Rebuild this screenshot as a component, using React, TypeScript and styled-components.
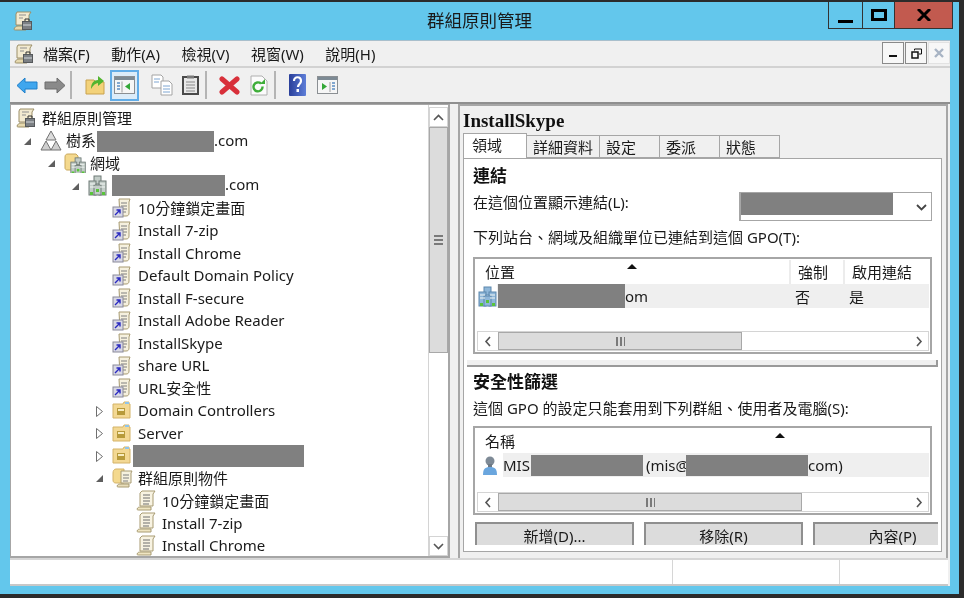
import React from "react";
import styled, { createGlobalStyle } from "styled-components";

const GlobalStyle = createGlobalStyle`
  html, body {
    margin: 0;
    padding: 0;
    background: #2b2b2b;
  }
  body {
    font-family: "Noto Sans", "Noto Sans CJK TC", sans-serif;
    color: #1a1a1a;
  }
`;

const Screen = styled.div`
  width: 964px;
  height: 598px;
  box-sizing: border-box;
  padding: 2px 5px 4px 0;
  background: #2b2b2b;
  overflow: hidden;
`;

const Window = styled.div`
  height: 100%;
  background: #63c7ec;
  display: flex;
  flex-direction: column;
  filter: blur(0.5px);
`;

const TitleBar = styled.div`
  height: 38px;
  flex: none;
  display: flex;
  align-items: flex-start;
  position: relative;
  padding-left: 13px;
`;

const TitleIcon = styled.div`
  margin-top: 9px;
`;

const TitleText = styled.div`
  position: absolute;
  left: 0;
  right: 0;
  top: 6px;
  text-align: center;
  font-size: 17.5px;
  line-height: 24px;
  color: #1a1a1a;
`;

const Caption = styled.div`
  position: absolute;
  top: 0;
  left: 828px;
  display: flex;
  height: 26px;
  border: 1px solid #333;
  border-top: none;
  box-sizing: content-box;
`;

const CaptionBtn = styled.div<{ $w: number; $danger?: boolean }>`
  width: ${(p) => p.$w}px;
  height: 26px;
  display: flex;
  align-items: center;
  justify-content: center;
  background: ${(p) => (p.$danger ? "#c25a4f" : "transparent")};
  & + & {
    border-left: 1px solid #333;
  }
`;

const Client = styled.div`
  flex: 1;
  margin: 0 9px 8px 10px;
  display: flex;
  flex-direction: column;
  min-height: 0;
  background: #f0f0f0;
`;

const MenuBar = styled.div`
  height: 28px;
  flex: none;
  display: flex;
  align-items: center;
  padding-left: 4px;
  border-top: 1px solid #a9bfcc;
  border-bottom: 2px solid #d2d2d2;
  box-sizing: border-box;
  position: relative;
`;

const MenuIcon = styled.div`
  width: 29px;
  display: flex;
`;

const MenuItem = styled.div`
  font-size: 15px;
  line-height: 22px;
  margin-right: 21.5px;
  white-space: nowrap;
`;

const MdiButtons = styled.div`
  position: absolute;
  right: 0;
  top: 1px;
  display: flex;
  gap: 1px;
`;

const MdiBtn = styled.div<{ $off?: boolean }>`
  width: 22px;
  height: 22px;
  box-sizing: border-box;
  border: 1px solid ${(p) => (p.$off ? "#e2e2e2" : "#8a8a8a")};
  background: #f7f7f7;
  display: flex;
  align-items: center;
  justify-content: center;
`;

const ToolBar = styled.div`
  height: 36px;
  flex: none;
  display: flex;
  align-items: center;
  padding-left: 2px;
  border-bottom: 2px solid #8f8f8f;
  box-sizing: border-box;
`;

const ToolBtn = styled.div<{ $w?: number; $ml?: number; $active?: boolean }>`
  width: ${(p) => p.$w ?? 29}px;
  height: 31px;
  margin-left: ${(p) => p.$ml ?? 0}px;
  flex: none;
  box-sizing: border-box;
  display: flex;
  align-items: center;
  justify-content: center;
  ${(p) => p.$active && "background: #dcecf9; border: 2px solid #62ade8;"}
`;

const ToolSep = styled.div`
  width: 2px;
  height: 28px;
  margin: 0 1px;
  background: #b4b4b4;
  flex: none;
`;

const Panes = styled.div`
  flex: 1;
  min-height: 0;
  display: flex;
  gap: 8px;
  padding-right: 2px;
`;

const TreePane = styled.div`
  width: 440px;
  flex: none;
  background: #fff;
  border: 1px solid #a6a6a6;
  border-bottom: 2px solid #a6a6a6;
  border-right: 2px solid #a6a6a6;
  box-sizing: border-box;
  display: flex;
  min-height: 0;
`;

const Tree = styled.div`
  flex: 1;
  overflow: hidden;
  padding-top: 1.5px;
  min-width: 0;
`;

const Row = styled.div<{ $level: number }>`
  height: 22.5px;
  display: flex;
  align-items: center;
  padding-left: ${(p) => 5 + p.$level * 24}px;
  font-size: 15px;
  white-space: nowrap;
`;

const Expander = styled.div`
  width: 15px;
  height: 22px;
  flex: none;
  margin: 2px 5px 0 -20px;
  display: flex;
  align-items: center;
  justify-content: center;
`;

const NodeIcon = styled.div`
  width: 26px;
  flex: none;
  display: flex;
  align-items: center;
`;

const Redact = styled.span<{ $w: number; $h?: number; $ml?: number }>`
  display: inline-block;
  width: ${(p) => p.$w}px;
  height: ${(p) => p.$h ?? 21}px;
  margin-left: ${(p) => p.$ml ?? 0}px;
  background: #808080;
  vertical-align: middle;
  flex: none;
`;

const VScroll = styled.div`
  width: 20px;
  flex: none;
  display: flex;
  flex-direction: column;
  padding-top: 2px;
  box-sizing: border-box;
  border-left: 1px solid #d4d4d4;
`;

const VScrollBtn = styled.div`
  height: 20px;
  flex: none;
  display: flex;
  align-items: center;
  justify-content: center;
  border: 1px solid #d4d4d4;
  box-sizing: border-box;
  background: #fff;
`;

const VThumb = styled.div`
  height: 226px;
  flex: none;
  background: #dcdcdc;
  border: 1px solid #a8a8a8;
  box-sizing: border-box;
  display: flex;
  align-items: center;
  justify-content: center;
`;

const VTrack = styled.div`
  flex: 1;
`;

const Grip = styled.div`
  width: 9px;
  height: 10px;
  background: repeating-linear-gradient(to bottom, #7a7a7a 0, #7a7a7a 2px, transparent 2px, transparent 4px);
`;

const DetailPane = styled.div`
  flex: 1;
  min-width: 0;
  border: 2px solid #a6a6a6;
  border-bottom: none;
  box-sizing: border-box;
  padding: 0 4px 6px 3px;
  display: flex;
  flex-direction: column;
  min-height: 0;
`;

const GpoTitle = styled.div`
  height: 27px;
  flex: none;
  font-family: "Liberation Serif", serif;
  font-weight: bold;
  font-size: 19px;
  line-height: 30px;
  color: #111;
`;

const Tabs = styled.div`
  display: flex;
  height: 25px;
  flex: none;
  align-items: flex-end;
  position: relative;
  z-index: 1;
`;

const Tab = styled.div<{ $w: number; $active?: boolean }>`
  width: ${(p) => p.$w}px;
  height: ${(p) => (p.$active ? 25 : 23)}px;
  box-sizing: border-box;
  border: 1px solid #a6a6a6;
  border-bottom: ${(p) => (p.$active ? "none" : "1px solid #a6a6a6")};
  border-left-width: ${(p) => (p.$active ? 1 : 0)}px;
  background: ${(p) => (p.$active ? "#fff" : "#f0f0f0")};
  font-size: 15px;
  line-height: ${(p) => (p.$active ? 22 : 23)}px;
  padding-left: ${(p) => (p.$active ? 8 : 6)}px;
  white-space: nowrap;
`;

const TabPanel = styled.div`
  flex: 1;
  min-height: 0;
  background: #fff;
  border: 1px solid #a6a6a6;
  display: flex;
  flex-direction: column;
  padding: 6px 9px 0 9px;
  overflow: hidden;
`;

const Heading = styled.div`
  font-size: 17px;
  font-weight: bold;
  line-height: 22px;
  height: 22px;
  flex: none;
  color: #111;
`;

const Field = styled.div<{ $h: number }>`
  height: ${(p) => p.$h}px;
  flex: none;
  font-size: 15px;
  line-height: 30px;
  display: flex;
  align-items: flex-start;
  justify-content: space-between;
  white-space: nowrap;
`;

const Caption2 = styled(Field)`
  line-height: ${(p) => p.$h}px;
`;

const Select = styled.div`
  width: 193px;
  height: 29px;
  margin-top: 5px;
  box-sizing: border-box;
  border: 1px solid #a6a6a6;
  border-left: 2px solid #a6a6a6;
  display: flex;
  align-items: flex-start;
  justify-content: space-between;
  padding: 0 4px 0 0;
`;

const ListView = styled.div<{ $h: number; $mt: number }>`
  height: ${(p) => p.$h}px;
  margin-top: ${(p) => p.$mt}px;
  flex: none;
  border: 2px solid #a6a6a6;
  box-sizing: border-box;
  padding: 1px 1px 1px 2px;
  display: flex;
  flex-direction: column;
  position: relative;
`;

const ListHeader = styled.div`
  height: 24px;
  flex: none;
  display: flex;
  font-size: 15px;
  line-height: 24px;
  position: relative;
`;

const HeaderCell = styled.div<{ $w?: number }>`
  ${(p) => (p.$w ? `width: ${p.$w}px; flex: none;` : "flex: 1;")}
  padding-left: ${(p) => (p.$w ? 7 : 8)}px;
  box-sizing: border-box;
  & + & {
    border-left: 2px solid #ececec;
  }
`;

const SortArrow = styled.div<{ $left: number }>`
  position: absolute;
  top: 4px;
  left: ${(p) => p.$left}px;
  width: 0;
  height: 0;
  border-left: 5px solid transparent;
  border-right: 5px solid transparent;
  border-bottom: 5px solid #111;
`;

const ListRow = styled.div`
  height: 24px;
  flex: none;
  display: flex;
  align-items: center;
  font-size: 15px;
  white-space: nowrap;
`;

const RowBody = styled.div`
  flex: 1;
  height: 24px;
  background: #efefef;
  display: flex;
  align-items: center;
  min-width: 0;
`;

const RowIcon = styled.div<{ $w: number }>`
  width: ${(p) => p.$w}px;
  flex: none;
  display: flex;
  justify-content: center;
`;

const Cell = styled.span<{ $w: number; $flush?: boolean }>`
  width: ${(p) => p.$w}px;
  flex: none;
  padding-left: ${(p) => (p.$flush ? 0 : 7)}px;
  box-sizing: border-box;
`;

const Email = styled.span`
  margin-left: 3px;
`;

const ListGap = styled.div`
  flex: 1;
`;

const HScroll = styled.div`
  height: 20px;
  flex: none;
  display: flex;
  border: 1px solid #d4d4d4;
  box-sizing: border-box;
`;

const HScrollBtn = styled.div`
  width: 20px;
  flex: none;
  display: flex;
  align-items: center;
  justify-content: center;
`;

const HThumb = styled.div<{ $w: number }>`
  width: ${(p) => p.$w}px;
  flex: none;
  background: #dcdcdc;
  border: 1px solid #a8a8a8;
  box-sizing: border-box;
  display: flex;
  align-items: center;
  justify-content: center;
`;

const HGrip = styled.div`
  width: 9px;
  height: 9px;
  background: repeating-linear-gradient(to right, #7a7a7a 0, #7a7a7a 2px, transparent 2px, transparent 4px);
`;

const HTrack = styled.div`
  flex: 1;
`;

const Splitter = styled.div`
  height: 5px;
  flex: none;
  margin: 6px -6px 4px -6px;
  background: #f0f0f0;
  border-bottom: 2px solid #9a9a9a;
  border-right: 2px solid #9a9a9a;
`;

const Buttons = styled.div`
  height: 23px;
  flex: none;
  margin: 7px -6px 0 2px;
  display: flex;
  gap: 10px;
  overflow: hidden;
`;

const ActionBtn = styled.div`
  width: 159px;
  height: 23px;
  flex: none;
  box-sizing: border-box;
  background: #dcdcdc;
  border: 2px solid #8f8f8f;
  border-bottom: none;
  padding-top: 4px;
  text-align: center;
  font-size: 15px;
  line-height: 17px;
  white-space: nowrap;
`;

const StatusBar = styled.div`
  height: 28px;
  flex: none;
  margin-right: 2px;
  background: #fff;
  display: flex;
  border-top: 2px solid #d6d6d6;
  border-bottom: 2px solid #c8c8c8;
  box-sizing: border-box;
`;

const StatusCell = styled.div<{ $w?: number }>`
  ${(p) => (p.$w ? `width: ${p.$w}px; flex: none;` : "flex: 1;")}
  border-left: 1px solid #d6d6d6;
  &:first-child {
    border-left: none;
  }
`;

const GpmcIcon = () => (
  <svg width="20" height="20" viewBox="0 0 20 20">
    <path d="M4 1h14l-2 3v10H3V3z" fill="#f3ead0" stroke="#9c8f68" />
    <path d="M1 18c1-2 2-3 4-3h8v4H3c-1 0-2 0-2-1z" fill="#e6d9ae" stroke="#9c8f68" />
    <path d="M6 4h7M6 7h4" stroke="#8f8f8f" />
    <rect x="9.500" y="10.500" width="9" height="8" fill="#7c8084" stroke="#55585b" />
    <path d="M12 10V8h4v2" fill="none" stroke="#333" />
    <path d="M10 14h8" stroke="#d4d8dc" />
  </svg>
);

const ForestIcon = () => (
  <svg width="22" height="21" viewBox="0 0 22 21">
    <path d="M11 1l5 9H6z" fill="#dcdcdc" stroke="#727272" />
    <path d="M6 11l5 9H1z" fill="#cfcfcf" stroke="#727272" />
    <path d="M16 11l5 9H11z" fill="#cfcfcf" stroke="#727272" />
  </svg>
);

const Servers = ({ blue }: { blue?: boolean }) => {
  const fill = blue ? "#8fb7d9" : "#c3cdc8";
  const line = blue ? "#5d88ad" : "#6f7a76";
  return (
    <>
      <rect x="6" y="1" width="7" height="8" fill={fill} stroke={line} />
      <rect x="1" y="6" width="7" height="14" fill={fill} stroke={line} />
      <rect x="11" y="6" width="7" height="14" fill={fill} stroke={line} />
      <rect x="6" y="10" width="7" height="10" fill={fill} stroke={line} />
      <path d="M2 9h5M12 9h5M2 12h5M12 12h5" stroke="#f2f6f4" />
      <rect x="8" y="14" width="3" height="3" fill="#58c43a" />
      <rect x="2" y="17" width="3" height="3" fill="#58c43a" />
      <rect x="14" y="17" width="3" height="3" fill="#58c43a" />
    </>
  );
};

const DomainIcon = ({ blue }: { blue?: boolean }) => (
  <svg width="19" height="21" viewBox="0 0 19 21">
    <Servers blue={blue} />
  </svg>
);

const DomainsFolderIcon = () => (
  <svg width="22" height="20" viewBox="0 0 22 20">
    <path d="M1 4c0-2 1-3 3-3h8l2 2v14H3c-1 0-2-1-2-2z" fill="#f4d98e" stroke="#c9a85c" />
    <g transform="translate(6 4) scale(0.85)">
      <Servers />
    </g>
  </svg>
);

const GpoLinkIcon = () => (
  <svg width="20" height="21" viewBox="0 0 20 21">
    <path d="M7 2h11l-1 3v11c0 2-1 3-3 3H8z" fill="#f6f1df" stroke="#a89b72" />
    <path d="M9 6h6M9 9h6M9 12h6M9 15h5" stroke="#7e7e7e" />
    <rect x="1" y="10" width="10" height="10" fill="#d8d8e4" stroke="#8a8a9a" />
    <path d="M3 18l5-5M4.500 13H8v3.500" fill="none" stroke="#2a2ac0" strokeWidth="1.400" />
  </svg>
);

const FolderIcon = () => (
  <svg width="19" height="18" viewBox="0 0 19 18">
    <path d="M1 3h10l1-2h5v2h1v14H1z" fill="#f3d893" stroke="#d4b368" />
    <path d="M13 1h4v2h-4z" fill="#8fc4ea" />
    <rect x="5" y="7" width="8" height="7" fill="#b79a3a" />
    <rect x="6" y="8" width="6" height="2" fill="#f7ecc0" />
  </svg>
);

const GpoFolderIcon = () => (
  <svg width="22" height="21" viewBox="0 0 22 21">
    <path d="M1 6c0-2 1-4 3-4h8v14H4c-2 0-3-1-3-3z" fill="#f4d98e" stroke="#d4b368" />
    <path d="M9 4h11l-1 2v10H9z" fill="#f6f1df" stroke="#a89b72" />
    <path d="M11 8h6M11 11h6M11 14h5" stroke="#7e7e7e" />
    <path d="M5 19c1-2 2-2 4-2h8v3H7c-1 0-2 0-2-1z" fill="#e9deba" stroke="#a89b72" />
  </svg>
);

const GpoIcon = () => (
  <svg width="20" height="21" viewBox="0 0 20 21">
    <path d="M6 1h13l-2 3v12H4V3z" fill="#f8f3e2" stroke="#a89b72" />
    <path d="M7 5h7M7 8h7M7 11h7M7 14h6" stroke="#6f6f6f" />
    <path d="M1 19c1-2 2-2 4-2h10v3H3c-1 0-2 0-2-1z" fill="#efe5c2" stroke="#a89b72" />
  </svg>
);

const UserIcon = () => (
  <svg width="16" height="21" viewBox="0 0 16 21">
    <circle cx="8" cy="6" r="4.500" fill="#7e8a96" />
    <path d="M6 9h4v3H6z" fill="#6c7884" />
    <path d="M1 20c0-6 2-8 7-8s7 2 7 8z" fill="#6aa6de" />
  </svg>
);

const OpenArrow = () => (
  <svg width="9" height="9" viewBox="0 0 9 9">
    <path d="M8 1v7H1z" fill="#5f5f5f" />
  </svg>
);

const ClosedArrow = () => (
  <svg width="9" height="13" viewBox="0 0 9 13">
    <path d="M1.500 1.500l6 5-6 5z" fill="#fff" stroke="#6f6f6f" />
  </svg>
);

const Chevron = ({ d }: { d: string }) => (
  <svg width="11" height="11" viewBox="0 0 11 11">
    <path d={d} fill="none" stroke="#555" strokeWidth="1.600" />
  </svg>
);

const ShowPaneIcon = ({ right }: { right?: boolean }) => (
  <svg width="21" height="20" viewBox="0 0 21 20">
    <rect x="0.500" y="1.500" width="20" height="17" fill="#f6f6f6" stroke="#8b8f93" />
    <rect x="1" y="2" width="19" height="3" fill="#7d8a94" />
    {right ? (
      <>
        <path d="M5 8v7l5-3.500z" fill="#34a838" />
        <path d="M13 7v10" stroke="#a0a0a0" />
        <path d="M15 8h3M15 11h3M15 14h3" stroke="#5d8fc4" strokeWidth="1.500" />
      </>
    ) : (
      <>
        <path d="M8 6.500v11" stroke="#a0a0a0" />
        <path d="M3 8h3M3 11h3M3 14h3" stroke="#5d8fc4" strokeWidth="1.500" />
        <path d="M16 8v7l-5-3.500z" fill="#34a838" />
      </>
    )}
  </svg>
);

const treeRows: {
  level: number;
  arrow?: "open" | "closed";
  icon: React.ReactNode;
  text: React.ReactNode;
}[] = [
  { level: 0, icon: <GpmcIcon />, text: "群組原則管理" },
  { level: 1, arrow: "open", icon: <ForestIcon />, text: <>樹系<Redact $w={117} $ml={1} />.com</> },
  { level: 2, arrow: "open", icon: <DomainsFolderIcon />, text: "網域" },
  { level: 3, arrow: "open", icon: <DomainIcon />, text: <><Redact $w={113} $ml={-2} />.com</> },
  { level: 4, icon: <GpoLinkIcon />, text: "10分鐘鎖定畫面" },
  { level: 4, icon: <GpoLinkIcon />, text: "Install 7-zip" },
  { level: 4, icon: <GpoLinkIcon />, text: "Install Chrome" },
  { level: 4, icon: <GpoLinkIcon />, text: "Default Domain Policy" },
  { level: 4, icon: <GpoLinkIcon />, text: "Install F-secure" },
  { level: 4, icon: <GpoLinkIcon />, text: "Install Adobe Reader" },
  { level: 4, icon: <GpoLinkIcon />, text: "InstallSkype" },
  { level: 4, icon: <GpoLinkIcon />, text: "share URL" },
  { level: 4, icon: <GpoLinkIcon />, text: "URL安全性" },
  { level: 4, arrow: "closed", icon: <FolderIcon />, text: "Domain Controllers" },
  { level: 4, arrow: "closed", icon: <FolderIcon />, text: "Server" },
  { level: 4, arrow: "closed", icon: <FolderIcon />, text: <Redact $w={171} $h={22} $ml={-5} /> },
  { level: 4, arrow: "open", icon: <GpoFolderIcon />, text: "群組原則物件" },
  { level: 5, icon: <GpoIcon />, text: "10分鐘鎖定畫面" },
  { level: 5, icon: <GpoIcon />, text: "Install 7-zip" },
  { level: 5, icon: <GpoIcon />, text: "Install Chrome" },
];

export default function App() {
  return (
    <>
      <GlobalStyle />
      <Screen>
        <Window>
          <TitleBar>
            <TitleIcon>
              <GpmcIcon />
            </TitleIcon>
            <TitleText>群組原則管理</TitleText>
            <Caption>
              <CaptionBtn $w={33}>
                <svg width="16" height="16" viewBox="0 0 16 16"><rect x="0" y="13" width="15" height="3" fill="#000" /></svg>
              </CaptionBtn>
              <CaptionBtn $w={31}>
                <svg width="16" height="12" viewBox="0 0 16 12"><rect x="1.500" y="1.500" width="13" height="9" fill="none" stroke="#000" strokeWidth="3" /></svg>
              </CaptionBtn>
              <CaptionBtn $w={57} $danger>
                <svg width="14" height="12" viewBox="0 0 14 12"><path d="M1 0l12 12M13 0L1 12" stroke="#000" strokeWidth="3" /></svg>
              </CaptionBtn>
            </Caption>
          </TitleBar>
          <Client>
            <MenuBar>
              <MenuIcon><GpmcIcon /></MenuIcon>
              <MenuItem>檔案(F)</MenuItem>
              <MenuItem>動作(A)</MenuItem>
              <MenuItem>檢視(V)</MenuItem>
              <MenuItem>視窗(W)</MenuItem>
              <MenuItem>說明(H)</MenuItem>
              <MdiButtons>
                <MdiBtn>
                  <svg width="8" height="8" viewBox="0 0 8 8"><rect y="6" width="8" height="2" fill="#111" /></svg>
                </MdiBtn>
                <MdiBtn>
                  <svg width="11" height="11" viewBox="0 0 11 11"><path d="M3.500 2.500V1h7v5H8" fill="none" stroke="#111" /><rect x="1" y="4" width="6" height="6" fill="none" stroke="#111" strokeWidth="1.500" /></svg>
                </MdiBtn>
                <MdiBtn $off>
                  <svg width="10" height="10" viewBox="0 0 10 10"><path d="M1 1l8 8M9 1L1 9" stroke="#a8b4c4" strokeWidth="2.400" /></svg>
                </MdiBtn>
              </MdiButtons>
            </MenuBar>
            <ToolBar>
              <ToolBtn>
                <svg width="22" height="17" viewBox="0 0 22 17"><path d="M9 1L1 8.500 9 16v-4h12V5H9z" fill="#3fa6ee" stroke="#1f7fc9" /></svg>
              </ToolBtn>
              <ToolBtn $w={28}>
                <svg width="22" height="17" viewBox="0 0 22 17"><path d="M13 1l8 7.500L13 16v-4H1V5h12z" fill="#8a8a8a" stroke="#6c6c6c" /></svg>
              </ToolBtn>
              <ToolSep />
              <ToolBtn $ml={7}>
                <svg width="20" height="20" viewBox="0 0 20 20">
                  <path d="M1 5h8l2 2h8v12H1z" fill="#f3d27a" stroke="#c9a24e" />
                  <path d="M6 14c0-6 3-9 7-9V1l6 5-6 5V8c-2 0-5 2-7 6z" fill="#52b52f" />
                </svg>
              </ToolBtn>
              <ToolBtn $ml={1} $active>
                <ShowPaneIcon />
              </ToolBtn>
              <ToolBtn $ml={8}>
                <svg width="22" height="22" viewBox="0 0 22 22">
                  <path d="M1 1h9l2 2v11H1z" fill="#fff" stroke="#a4a4a4" />
                  <path d="M10 7h8l3 3v11H10z" fill="#fff" stroke="#a4a4a4" />
                  <path d="M3 5h6M3 8h5M12 12h7M12 15h7M12 18h7" stroke="#7fa6d2" />
                </svg>
              </ToolBtn>
              <ToolBtn $w={28}>
                <svg width="17" height="20" viewBox="0 0 17 20">
                  <rect x="1" y="2" width="15" height="17" fill="#e8e8e8" stroke="#4a4a4a" strokeWidth="2" />
                  <rect x="5" y="0.500" width="7" height="3" fill="#7a7a7a" />
                  <path d="M4 7h9M4 10h9M4 13h9M4 16h9" stroke="#8a8a8a" />
                </svg>
              </ToolBtn>
              <ToolSep />
              <ToolBtn $ml={7}>
                <svg width="21" height="19" viewBox="0 0 21 19"><path d="M3 3l15 13M18 3L3 16" stroke="#d8303a" strokeWidth="5" strokeLinecap="round" /></svg>
              </ToolBtn>
              <ToolBtn $ml={1} $w={28}>
                <svg width="18" height="21" viewBox="0 0 18 21">
                  <path d="M1 1h11l5 5v14H1z" fill="#fbfbfb" stroke="#b0b0b0" />
                  <path d="M13 10.500a4.500 4.500 0 1 1-1.500-3" transform="translate(-0.500 1)" fill="none" stroke="#3fae3a" strokeWidth="2.400" />
                  <path d="M10 9h5V4z" fill="#3fae3a" />
                </svg>
              </ToolBtn>
              <ToolSep />
              <ToolBtn $ml={8} $w={24}>
                <svg width="17" height="22" viewBox="0 0 17 22">
                  <defs>
                    <linearGradient id="helpFill" x1="0" y1="0" x2="1" y2="0">
                      <stop offset="0" stopColor="#2a3f9a" />
                      <stop offset="1" stopColor="#5e7ed8" />
                    </linearGradient>
                  </defs>
                  <rect width="17" height="22" rx="1" fill="url(#helpFill)" />
                  <path d="M5 7c0-5 7-5 7 0 0 3-3 3-3 6" fill="none" stroke="#fff" strokeWidth="2.200" />
                  <rect x="7.500" y="15" width="2.500" height="3" fill="#fff" />
                </svg>
              </ToolBtn>
              <ToolBtn $ml={4} $w={28}>
                <ShowPaneIcon right />
              </ToolBtn>
            </ToolBar>
            <Panes>
              <TreePane>
                <Tree>
                  {treeRows.map((r, i) => (
                    <Row key={i} $level={r.level}>
                      <Expander>
                        {r.arrow === "open" && <OpenArrow />}
                        {r.arrow === "closed" && <ClosedArrow />}
                      </Expander>
                      <NodeIcon>{r.icon}</NodeIcon>
                      <span>{r.text}</span>
                    </Row>
                  ))}
                </Tree>
                <VScroll>
                  <VScrollBtn><Chevron d="M1 8l4.500-4.500L10 8" /></VScrollBtn>
                  <VThumb><Grip /></VThumb>
                  <VTrack />
                  <VScrollBtn><Chevron d="M1 3l4.500 4.500L10 3" /></VScrollBtn>
                </VScroll>
              </TreePane>
              <DetailPane>
                <GpoTitle>InstallSkype</GpoTitle>
                <Tabs>
                  <Tab $w={64} $active>領域</Tab>
                  <Tab $w={73}>詳細資料</Tab>
                  <Tab $w={60}>設定</Tab>
                  <Tab $w={60}>委派</Tab>
                  <Tab $w={60}>狀態</Tab>
                </Tabs>
                <TabPanel>
                  <Heading>連結</Heading>
                  <Field $h={34}>
                    在這個位置顯示連結(L):
                    <Select>
                      <Redact $w={152} $h={22} />
                      <svg width="11" height="27" viewBox="0 0 11 27"><path d="M1 12l4.500 4.500L10 12" fill="none" stroke="#444" strokeWidth="1.800" /></svg>
                    </Select>
                  </Field>
                  <Caption2 $h={32}>下列站台、網域及組織單位已連結到這個 GPO(T):</Caption2>
                  <ListView $h={97} $mt={4}>
                    <ListHeader>
                      <HeaderCell>位置</HeaderCell>
                      <HeaderCell $w={54}>強制</HeaderCell>
                      <HeaderCell $w={86}>啟用連結</HeaderCell>
                      <SortArrow $left={150} />
                    </ListHeader>
                    <ListRow>
                      <RowIcon $w={20}><DomainIcon blue /></RowIcon>
                      <RowBody>
                        <Redact $w={127} $h={24} $ml={1} />
                        <Cell $w={163} $flush>om</Cell>
                        <Cell $w={54}>否</Cell>
                        <Cell $w={80}>是</Cell>
                      </RowBody>
                    </ListRow>
                    <ListGap />
                    <HScroll>
                      <HScrollBtn><Chevron d="M7 1L3 5.500 7 10" /></HScrollBtn>
                      <HThumb $w={244}><HGrip /></HThumb>
                      <HTrack />
                      <HScrollBtn><Chevron d="M4 1l4 4.500L4 10" /></HScrollBtn>
                    </HScroll>
                  </ListView>
                  <Splitter />
                  <Heading>安全性篩選</Heading>
                  <Caption2 $h={31}>這個 GPO 的設定只能套用到下列群組、使用者及電腦(S):</Caption2>
                  <ListView $h={89} $mt={2}>
                    <ListHeader>
                      <HeaderCell>名稱</HeaderCell>
                      <SortArrow $left={298} />
                    </ListHeader>
                    <ListRow>
                      <RowIcon $w={26}><UserIcon /></RowIcon>
                      <RowBody>
                        MIS
                        <Redact $w={112} $ml={1} />
                        <Email>(mis@</Email>
                        <Redact $w={122} $ml={-3} />
                        com)
                      </RowBody>
                    </ListRow>
                    <ListGap />
                    <HScroll>
                      <HScrollBtn><Chevron d="M7 1L3 5.500 7 10" /></HScrollBtn>
                      <HThumb $w={304}><HGrip /></HThumb>
                      <HTrack />
                      <HScrollBtn><Chevron d="M4 1l4 4.500L4 10" /></HScrollBtn>
                    </HScroll>
                  </ListView>
                  <Buttons>
                    <ActionBtn>新增(D)...</ActionBtn>
                    <ActionBtn>移除(R)</ActionBtn>
                    <ActionBtn>內容(P)</ActionBtn>
                  </Buttons>
                </TabPanel>
              </DetailPane>
            </Panes>
            <StatusBar>
              <StatusCell />
              <StatusCell $w={166} />
              <StatusCell $w={108} />
            </StatusBar>
          </Client>
        </Window>
      </Screen>
    </>
  );
}
